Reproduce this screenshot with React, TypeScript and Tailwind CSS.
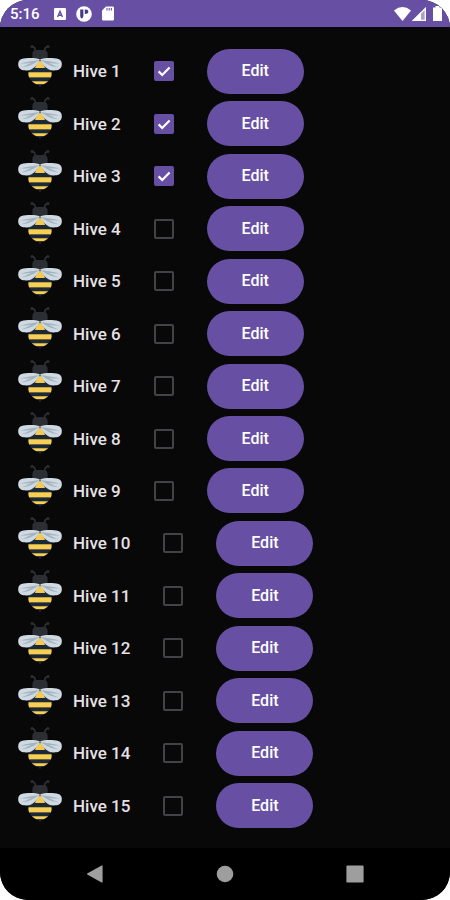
import { useState } from "react"

interface Hive {
    id: number
    name: string
    active: boolean
}

const initialHives: Hive[] = Array.from({ length: 15 }, (_, i) => ({
    id: i + 1,
    name: `Hive ${i + 1}`,
    active: i < 3,
}))

function BeeIcon() {
    return (
        <svg className="size-11 shrink-0" viewBox="0 0 44 44" aria-hidden="true">
            <g fill="none" stroke="#2b2f33" strokeWidth="1.8" strokeLinecap="round">
                <path d="M17.6 6.5 C17.4 3.8 16.4 2 14.4 1.4" />
                <path d="M26.4 6.5 C26.6 3.8 27.6 2 29.6 1.4" />
            </g>
            <circle cx="14" cy="1.6" r="1.5" fill="#2b2f33" />
            <circle cx="30" cy="1.6" r="1.5" fill="#2b2f33" />
            <path d="M14.4 14 V9 Q14.4 5 18.4 5 H25.6 Q29.6 5 29.6 9 V14Z" fill="#2b2f33" />
            <path d="M10.8 26 Q14 22 19 20 H25 Q30 22 33.2 26 L33.6 27.6 H10.4Z" fill="#1c2937" />
            <path d="M22 15.4 C24.4 17 26.4 20.4 27 23 H17 C17.6 20.4 19.6 17 22 15.4Z" fill="#f6ca4c" />
            <path d="M10.4 27.2 H33.6 Q34 30.4 32.8 32.8 H11.2 Q10 30.4 10.4 27.2Z" fill="#f8cf55" />
            <path d="M11.2 32.6 H32.8 Q31.6 35 30 36.4 H14 Q12.4 35 11.2 32.6Z" fill="#1c2937" />
            <path d="M13.8 36.2 H30.2 Q27.4 38.6 25.4 39.2 H18.6 Q16.6 38.6 13.8 36.2Z" fill="#f8cf55" />
            <path d="M18.6 39 H25.4 Q24 40 22.8 40.2 L22 42.4 L21.2 40.2 Q20 40 18.6 39Z" fill="#27364a" />
            <path d="M22 14.4 C17 12.4 8 12.8 3.6 14 C0.4 15 -0.2 18.2 0.4 21 C1.2 24.6 4.6 25.6 9 25.4 C15 25 19.4 20 22 14.4Z" fill="#cfd9e1" />
            <path d="M22 14.4 C27 12.4 36 12.8 40.4 14 C43.6 15 44.2 18.2 43.6 21 C42.8 24.6 39.4 25.6 35 25.4 C29 25 24.6 20 22 14.4Z" fill="#cfd9e1" />
            <path d="M21 15 C15 16.4 8 16.6 2 18.6 C6 18.6 9.6 18.4 13 17.8 C9.6 20 6 21.4 3.4 22.2 C10 22 16.4 19 21 15Z" fill="#a3b3c0" />
            <path d="M23 15 C29 16.4 36 16.6 42 18.6 C38 18.6 34.4 18.4 31 17.8 C34.4 20 38 21.4 40.6 22.2 C34 22 27.6 19 23 15Z" fill="#a3b3c0" />
        </svg>
    )
}

function StatusBar() {
    return (
        <header className="flex h-[27px] items-center justify-between bg-[#6750a4] pl-[10px] pr-2 text-white">
            <div className="flex items-center">
                <span className="w-[44px] text-[15px] leading-4 font-medium">5:16</span>
                <svg className="size-3" viewBox="0 0 12 12" aria-hidden="true">
                    <rect width="12" height="12" rx="1.2" fill="#fff" />
                    <path d="M3.6 9 L6 3.4 L8.4 9 M4.4 7.2 H7.6" fill="none" stroke="#6750a4" strokeWidth="1.4" />
                </svg>
                <svg className="ml-[10px] size-4" viewBox="0 0 16 16" aria-hidden="true">
                    <circle cx="8" cy="8" r="7.8" fill="#fff" />
                    <path d="M4.2 3.6 H7.4 V10 Q7.2 12.4 5.8 12.6 Q4.2 12.2 4.2 10Z" fill="#4a3a86" />
                    <path d="M8.8 3.6 H10.4 Q12.4 3.8 12.4 5.8 Q12.2 8 8.8 8Z" fill="#4a3a86" />
                </svg>
                <svg className="ml-[10px] h-[15px] w-3" viewBox="0 0 12 15" aria-hidden="true">
                    <path d="M4 0.5 H10.8 Q12 0.5 12 1.7 V13.3 Q12 14.5 10.8 14.5 H1.2 Q0 14.5 0 13.3 V4.5Z" fill="#fff" />
                    <path d="M5 2 V4.4 M7.2 2 V4.4 M9.4 2 V4.4" stroke="#6750a4" strokeWidth="1.1" />
                </svg>
            </div>
            <div className="flex items-center">
                <svg className="h-[14px] w-[17px]" viewBox="0 0 17 14" aria-hidden="true">
                    <path d="M0 3.4 Q8.5 -3.4 17 3.4 L8.5 14Z" fill="#fff" />
                </svg>
                <svg className="ml-px size-[14px]" viewBox="0 0 14 14" aria-hidden="true">
                    <path d="M14 0 V14 H0Z" fill="#fff" fillOpacity="0.45" />
                    <path d="M9 5 V14 H0Z" fill="#fff" />
                    <path d="M13.3 1.6 V13.3 H1.6Z" fill="none" stroke="#fff" strokeWidth="1.3" />
                </svg>
                <svg className="ml-[7px] h-[15px] w-[9px]" viewBox="0 0 9 15" aria-hidden="true">
                    <path d="M2.5 0 H6.5 V1.5 H9 V15 H0 V1.5 H2.5Z" fill="#fff" />
                </svg>
            </div>
        </header>
    )
}

interface RowProps {
    hive: Hive
    onToggle: (id: number) => void
}

function HiveRow({ hive, onToggle }: RowProps) {
    const inputId = `hive-${hive.id}`

    return (
        <li className="flex flex-1 items-center">
            <div className="self-start">
                <BeeIcon />
            </div>
            <label htmlFor={inputId} className="ml-[11px] text-[17px] leading-6 font-medium text-[#e6e1e5]">
                {hive.name}
            </label>
            <span className="relative ml-[33px] size-5">
                <input
                    id={inputId}
                    type="checkbox"
                    checked={hive.active}
                    onChange={() => onToggle(hive.id)}
                    className="peer block size-5 appearance-none rounded-[2px] border-2 border-[#444246] checked:border-[#6750a4] checked:bg-[#6750a4]"
                />
                <svg
                    className="pointer-events-none absolute inset-0 hidden size-5 peer-checked:block"
                    viewBox="0 0 20 20"
                    aria-hidden="true"
                >
                    <path d="M4.6 10.4 L8.2 14 L15.6 6.4" fill="none" stroke="#fff" strokeWidth="2.2" />
                </svg>
            </span>
            <button
                type="button"
                className="ml-[33px] h-[45px] w-[97px] rounded-full bg-[#6750a4] text-base font-medium text-white"
            >
                Edit
            </button>
        </li>
    )
}

function NavigationBar() {
    return (
        <nav className="flex h-[52px] items-center justify-around bg-black px-[30px]">
            <button type="button" aria-label="Back">
                <svg className="size-[18px]" viewBox="0 0 18 18" aria-hidden="true">
                    <path d="M16.6 0.6 V17.4 Q16.2 17.8 15.6 17.4 L1.2 9.6 Q0.4 9 1.2 8.4 L15.6 0.6 Q16.2 0.2 16.6 0.6Z" fill="#9e9e9e" />
                </svg>
            </button>
            <button type="button" aria-label="Home">
                <svg className="size-[18px]" viewBox="0 0 18 18" aria-hidden="true">
                    <circle cx="9" cy="9" r="8.3" fill="#9e9e9e" />
                </svg>
            </button>
            <button type="button" aria-label="Recent apps">
                <svg className="size-[18px]" viewBox="0 0 18 18" aria-hidden="true">
                    <rect x="0.4" y="0.4" width="17.2" height="17.2" rx="1.2" fill="#9e9e9e" />
                </svg>
            </button>
        </nav>
    )
}

export default function App() {
    const [hives, setHives] = useState<Hive[]>(initialHives)

    const toggleHive = (id: number) => {
        setHives(prev => prev.map(hive => (hive.id === id ? { ...hive, active: !hive.active } : hive)))
    }

    return (
        <div className="min-h-screen bg-white font-['Roboto',sans-serif]">
            <div className="flex min-h-screen flex-col overflow-hidden rounded-[28px] bg-[#080808]">
                <StatusBar />
                <main className="flex flex-1 flex-col pt-[18px] pr-4 pb-4 pl-[18px]">
                    <ul className="flex flex-1 flex-col">
                        {hives.map(hive => (
                            <HiveRow key={hive.id} hive={hive} onToggle={toggleHive} />
                        ))}
                    </ul>
                </main>
                <NavigationBar />
            </div>
        </div>
    )
}
